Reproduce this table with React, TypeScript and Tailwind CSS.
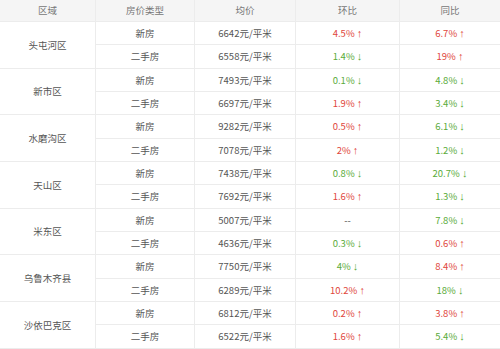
import React from "react";

type Row = { type: string; price: string; hb: string; hbUp: boolean | null; tb: string; tbUp: boolean | null };
type Group = { region: string; rows: Row[] };

const data: Group[] = [
  { region: "头屯河区", rows: [
    { type: "新房", price: "6642元/平米", hb: "4.5%", hbUp: true, tb: "6.7%", tbUp: true },
    { type: "二手房", price: "6558元/平米", hb: "1.4%", hbUp: false, tb: "19%", tbUp: true },
  ]},
  { region: "新市区", rows: [
    { type: "新房", price: "7493元/平米", hb: "0.1%", hbUp: false, tb: "4.8%", tbUp: false },
    { type: "二手房", price: "6697元/平米", hb: "1.9%", hbUp: true, tb: "3.4%", tbUp: false },
  ]},
  { region: "水磨沟区", rows: [
    { type: "新房", price: "9282元/平米", hb: "0.5%", hbUp: true, tb: "6.1%", tbUp: false },
    { type: "二手房", price: "7078元/平米", hb: "2%", hbUp: true, tb: "1.2%", tbUp: false },
  ]},
  { region: "天山区", rows: [
    { type: "新房", price: "7438元/平米", hb: "0.8%", hbUp: false, tb: "20.7%", tbUp: false },
    { type: "二手房", price: "7692元/平米", hb: "1.6%", hbUp: true, tb: "1.3%", tbUp: false },
  ]},
  { region: "米东区", rows: [
    { type: "新房", price: "5007元/平米", hb: "--", hbUp: null, tb: "7.8%", tbUp: false },
    { type: "二手房", price: "4636元/平米", hb: "0.3%", hbUp: false, tb: "0.6%", tbUp: true },
  ]},
  { region: "乌鲁木齐县", rows: [
    { type: "新房", price: "7750元/平米", hb: "4%", hbUp: false, tb: "8.4%", tbUp: true },
    { type: "二手房", price: "6289元/平米", hb: "10.2%", hbUp: true, tb: "18%", tbUp: false },
  ]},
  { region: "沙依巴克区", rows: [
    { type: "新房", price: "6812元/平米", hb: "0.2%", hbUp: true, tb: "3.8%", tbUp: true },
    { type: "二手房", price: "6522元/平米", hb: "1.6%", hbUp: true, tb: "5.4%", tbUp: false },
  ]},
];

const cell = "flex items-center justify-center border-b border-r border-[#ececec]";

function Change({ v, up }: { v: string; up: boolean | null }) {
  if (up === null) return <span className="text-[#555]">{v}</span>;
  return (
    <span className={up ? "text-[#e0463c]" : "text-[#5aab3a]"}>
      {v}{" "}
      <span style={{ fontFamily: '"Liberation Sans", sans-serif' }} className="text-[11px] leading-none">
        {up ? "↑" : "↓"}
      </span>
    </span>
  );
}

export default function App() {
  return (
    <div
      className="w-[500px] h-[349px] overflow-hidden bg-white text-[9.5px] text-[#555]"
      style={{ fontFamily: '"Noto Sans CJK SC", "Noto Sans", sans-serif' }}
    >
      <div className="grid grid-cols-[96px_99px_101px_104px_100px] grid-rows-[22px_repeat(14,23.33px)]">
        <div className={`${cell} bg-[#f5f5f5] text-[#777]`}>区域</div>
        <div className={`${cell} bg-[#f5f5f5] text-[#777]`}>房价类型</div>
        <div className={`${cell} bg-[#f5f5f5] text-[#777]`}>均价</div>
        <div className={`${cell} bg-[#f5f5f5] text-[#777]`}>环比</div>
        <div className={`${cell} bg-[#f5f5f5] text-[#777] border-r-0`}>同比</div>
        {data.map((g) => (
          <React.Fragment key={g.region}>
            <div className={`${cell} row-span-2`}>{g.region}</div>
            {g.rows.map((r, i) => (
              <React.Fragment key={i}>
                <div className={cell}>{r.type}</div>
                <div className={cell}>{r.price}</div>
                <div className={cell}><Change v={r.hb} up={r.hbUp} /></div>
                <div className={`${cell} border-r-0`}><Change v={r.tb} up={r.tbUp} /></div>
              </React.Fragment>
            ))}
          </React.Fragment>
        ))}
      </div>
    </div>
  );
}
